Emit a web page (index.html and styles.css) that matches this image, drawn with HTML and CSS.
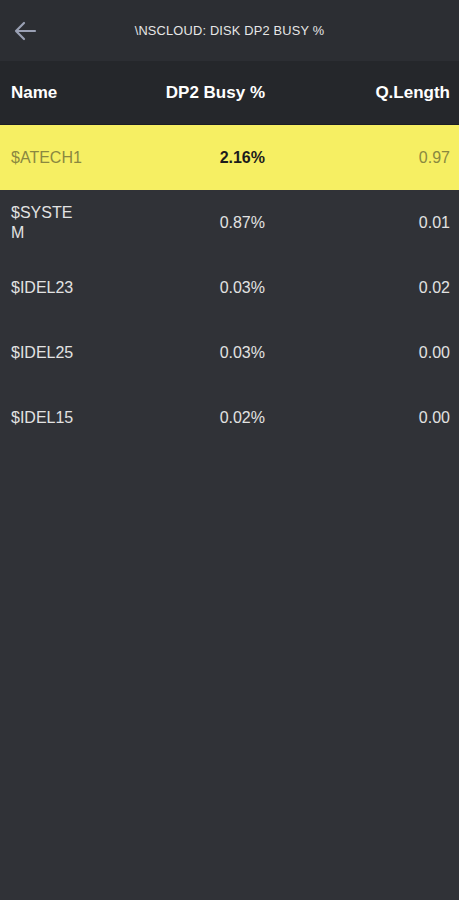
FILE: index.html
```html
<!DOCTYPE html>
<html lang="en">
<head>
    <meta charset="UTF-8">
    <meta name="viewport" content="width=device-width, initial-scale=1.0">
    <title>Disk DP2 Busy %</title>
    <link rel="stylesheet" href="styles.css">
</head>
<body>
    <header class="topbar">
        <button class="back-btn" type="button" aria-label="Back">
            <svg width="24" height="20" viewBox="0 0 24 20">
                <path d="M22 10H3M11 2L3 10l8 8" fill="none" stroke="#9aa0b4" stroke-width="2.2" stroke-linecap="round" stroke-linejoin="round"/>
            </svg>
        </button>
        <h1>\NSCLOUD: DISK DP2 BUSY %</h1>
    </header>
    <div class="table">
        <div class="row head">
            <div class="cell name">Name</div>
            <div class="cell busy">DP2 Busy %</div>
            <div class="cell qlen">Q.Length</div>
        </div>
        <div class="row highlight">
            <div class="cell name">$ATECH1</div>
            <div class="cell busy">2.16%</div>
            <div class="cell qlen">0.97</div>
        </div>
        <div class="row">
            <div class="cell name">$SYSTEM</div>
            <div class="cell busy">0.87%</div>
            <div class="cell qlen">0.01</div>
        </div>
        <div class="row">
            <div class="cell name">$IDEL23</div>
            <div class="cell busy">0.03%</div>
            <div class="cell qlen">0.02</div>
        </div>
        <div class="row">
            <div class="cell name">$IDEL25</div>
            <div class="cell busy">0.03%</div>
            <div class="cell qlen">0.00</div>
        </div>
        <div class="row">
            <div class="cell name">$IDEL15</div>
            <div class="cell busy">0.02%</div>
            <div class="cell qlen">0.00</div>
        </div>
    </div>
</body>
</html>
```

FILE: styles.css
```css
* {
    margin: 0;
    padding: 0;
    box-sizing: border-box;
}

body {
    font-family: "Liberation Sans", Arial, sans-serif;
    background-color: #303237;
    color: #e2e2e2;
    min-height: 100vh;
}

.topbar {
    height: 61px;
    background-color: #2c2e33;
    display: flex;
    align-items: center;
}

.back-btn {
    background: none;
    border: none;
    width: 50px;
    height: 61px;
    display: flex;
    align-items: center;
    justify-content: center;
    cursor: pointer;
}

.topbar h1 {
    flex: 1;
    margin-right: 50px;
    text-align: center;
    font-size: 12.8px;
    font-weight: normal;
    color: #e6e6e6;
    letter-spacing: 0.2px;
}

.table {
    display: flex;
    flex-direction: column;
}

.row {
    height: 65px;
    display: flex;
    align-items: center;
    padding: 0 9px 0 11px;
    font-size: 16px;
    line-height: 20px;
}

.row.head {
    height: 64px;
    background-color: #25272b;
    border-bottom: 1px solid #1c1e24;
    font-weight: bold;
    font-size: 17px;
    color: #ffffff;
}

.row.highlight {
    background-color: #f6ef63;
    color: #8a8840;
}

.row.highlight .busy {
    color: #1c1c1c;
    font-weight: bold;
}

.cell.name {
    flex: none;
    width: 73px;
    min-width: 0;
    overflow-wrap: anywhere;
}

.cell.busy {
    flex: none;
    width: 181px;
    text-align: right;
}

.cell.qlen {
    flex: 1;
    text-align: right;
}
```
